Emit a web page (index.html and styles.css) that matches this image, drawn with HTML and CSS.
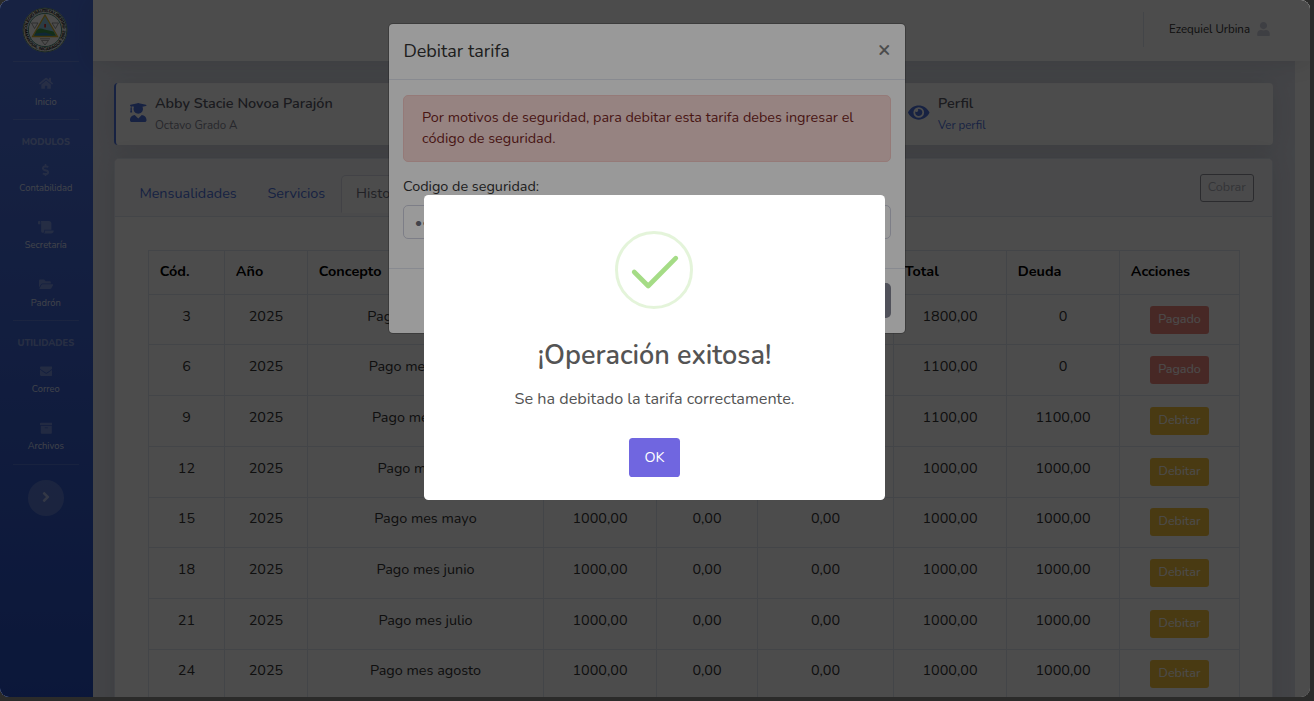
FILE: index.html
```html
<!DOCTYPE html>
<html lang="es">
<head>
<meta charset="utf-8">
<title>Debitar tarifa</title>
<link rel="stylesheet" href="styles.css">
</head>
<body>
<div class="window">
  <div class="page">
    <nav class="sidebar">
      <div class="brand">
        <svg width="46" height="46" viewBox="0 0 46 46">
          <defs><path id="ring-top" d="M5 23a18 18 0 0 1 36 0"/><path id="ring-bottom" d="M2.600 23a20.400 20.400 0 0 0 40.800 0"/></defs>
          <circle cx="23" cy="23" r="22.300" fill="#e9ecea"/>
          <circle cx="23" cy="23" r="21.900" fill="none" stroke="#4d7a68" stroke-width=".9"/>
          <circle cx="23" cy="23" r="16.600" fill="#fff" stroke="#4f9080" stroke-width="1"/>
          <text class="seal-text"><textPath href="#ring-top" textLength="55">COLEGIO BAUTISTA LIBERTAD</textPath></text>
          <text class="seal-text"><textPath href="#ring-bottom" textLength="63">MANAGUA, NICARAGUA 2002</textPath></text>
          <path d="M9.500 16h6.500L12.500 21.500zM30 16h6.500L33.500 21.500zM19.500 33.500h7L23 38zM18 31.800h10" fill="none" stroke="#777" stroke-width=".7"/>
          <path d="M23 8 35.500 29.500h-25z" fill="#93cbe4" stroke="#d6b12c" stroke-width="1.300"/>
          <path d="M14.500 23.500c3-3 5-2 8-1l9 2 2.500 4.300H12z" fill="#419a4f"/>
          <path d="M14 26.500l9-1 9 3H12.500z" fill="#3285bb"/>
          <path d="M22.200 17h1.800v3.500h-1.800z" fill="#c33"/>
        </svg>
      </div>
      <hr class="divider">
      <a class="nav-item"><svg class="ico" viewBox="0 0 576 512"><path d="M280.370 148.260L96 300.110V464a16 16 0 0 0 16 16l112.060-.29a16 16 0 0 0 15.920-16V368a16 16 0 0 1 16-16h64a16 16 0 0 1 16 16v95.640a16 16 0 0 0 16 16.050L464 480a16 16 0 0 0 16-16V300L295.670 148.260a12.190 12.190 0 0 0-15.300 0zM571.600 251.470L488 182.560V44.050a12 12 0 0 0-12-12h-56a12 12 0 0 0-12 12v72.610L318.470 43a48 48 0 0 0-61 0L4.340 251.470a12 12 0 0 0-1.600 16.900l25.500 31A12 12 0 0 0 45.150 301l235.220-193.740a12.190 12.190 0 0 1 15.300 0L530.900 301a12 12 0 0 0 16.900-1.600l25.500-31a12 12 0 0 0-1.700-16.930z"/></svg><span>Inicio</span></a>
      <hr class="divider">
      <div class="nav-heading">MODULOS</div>
      <a class="nav-item"><svg class="ico" viewBox="0 0 288 512"><path d="M209.200 233.400l-108-31.600C88.700 198.200 80 186.500 80 173.500c0-16.300 13.200-29.500 29.500-29.500h66.300c12.200 0 24.200 3.700 34.200 10.500 6.100 4.100 14.300 3.100 19.500-2l34.800-34c7.100-6.900 6.100-18.400-1.800-24.500C238 74.800 207.400 64.100 176 64V16c0-8.800-7.200-16-16-16h-32c-8.800 0-16 7.200-16 16v48h-2.500C45.800 64-5.400 118.700.5 183.600c4.200 46.100 39.400 83.600 83.800 96.600l102.500 30c12.500 3.700 21.200 15.300 21.200 28.300 0 16.300-13.200 29.500-29.500 29.500h-66.300C100 368 88 364.300 78 357.500c-6.100-4.100-14.300-3.100-19.500 2l-34.800 34c-7.100 6.900-6.100 18.400 1.800 24.500 24.500 19.200 55.100 29.900 86.500 30v48c0 8.800 7.200 16 16 16h32c8.800 0 16-7.200 16-16v-48.200c46.600-.9 90.300-28.600 105.700-72.700 21.500-61.600-14.600-124.800-72.500-141.700z"/></svg><span>Contabilidad</span></a>
      <a class="nav-item"><svg class="ico" viewBox="0 0 640 512"><path d="M48 0C21.530 0 0 21.530 0 48v64c0 8.840 7.160 16 16 16h80V48C96 21.530 74.470 0 48 0zm208 412.570V352h288V96c0-52.940-43.060-96-96-96H111.590C121.740 13.410 128 29.920 128 48v368c0 38.870 34.650 69.650 74.750 63.120C234.220 474 256 444.460 256 412.570zM288 384v32c0 52.930-43.060 96-96 96h336c61.860 0 112-50.140 112-112 0-8.840-7.160-16-16-16H288z"/></svg><span>Secretaría</span></a>
      <a class="nav-item"><svg class="ico" viewBox="0 0 576 512"><path d="M572.694 292.093L500.270 416.248A63.997 63.997 0 0 1 444.989 448H45.025c-18.523 0-30.064-20.093-20.731-36.093l72.424-124.155A64 64 0 0 1 152 256h399.964c18.523 0 30.064 20.093 20.730 36.093zM152 224h328v-48c0-26.510-21.490-48-48-48H272l-64-64H48C21.490 64 0 85.490 0 112v278.046l69.077-118.418C86.214 242.250 117.989 224 152 224z"/></svg><span>Padrón</span></a>
      <hr class="divider">
      <div class="nav-heading">UTILIDADES</div>
      <a class="nav-item"><svg class="ico" viewBox="0 0 512 512"><path d="M502.300 190.800c3.900-3.100 9.700-.2 9.700 4.700V400c0 26.500-21.500 48-48 48H48c-26.500 0-48-21.500-48-48V195.600c0-5 5.700-7.800 9.700-4.700 22.400 17.400 52.100 39.500 154.100 113.600 21.100 15.400 56.700 47.800 92.200 47.600 35.700.3 72-32.800 92.300-47.600 102-74.100 131.600-96.300 154-113.700zM256 320c23.200.4 56.600-29.200 73.400-41.400 132.700-96.300 142.800-104.700 173.400-128.700 5.800-4.500 9.200-11.500 9.200-18.900v-19c0-26.500-21.500-48-48-48H48c-26.500 0-48 21.500-48 48v19c0 7.400 3.400 14.300 9.200 18.900 30.600 23.900 40.700 32.400 173.400 128.700 16.800 12.200 50.200 41.800 73.400 41.400z"/></svg><span>Correo</span></a>
      <a class="nav-item"><svg class="ico" viewBox="0 0 512 512"><path d="M32 448c0 17.700 14.300 32 32 32h384c17.700 0 32-14.300 32-32V160H32v288zm160-212c0-6.600 5.400-12 12-12h104c6.600 0 12 5.400 12 12v8c0 6.600-5.400 12-12 12H204c-6.600 0-12-5.400-12-12v-8zM480 32H32C14.300 32 0 46.300 0 64v48c0 8.800 7.200 16 16 16h480c8.800 0 16-7.200 16-16V64c0-17.700-14.300-32-32-32z"/></svg><span>Archivos</span></a>
      <hr class="divider">
      <div class="toggle"><svg width="10" height="16" viewBox="0 0 256 512"><path d="M224.300 273l-136 136c-9.400 9.400-24.600 9.400-33.900 0l-22.600-22.600c-9.400-9.400-9.400-24.600 0-33.900l96.400-96.400-96.400-96.400c-9.400-9.400-9.400-24.600 0-33.900L54.300 103c9.400-9.400 24.600-9.400 33.900 0l136 136c9.500 9.400 9.500 24.600.1 34z"/></svg></div>
    </nav>
    <div class="main">
      <header class="topbar">
        <div class="topbar-divider"></div>
        <span class="user-name">Ezequiel Urbina</span>
        <svg class="user-icon" viewBox="0 0 448 512"><path d="M224 256c70.700 0 128-57.300 128-128S294.700 0 224 0 96 57.300 96 128s57.300 128 128 128zm89.600 32h-16.700c-22.200 10.200-46.900 16-72.900 16s-50.600-5.800-72.900-16h-16.700C60.200 288 0 348.200 0 422.400V464c0 26.500 21.500 48 48 48h352c26.500 0 48-21.500 48-48v-41.600c0-74.200-60.200-134.400-134.400-134.400z"/></svg>
      </header>
      <main class="content">
        <section class="card student">
          <div class="info">
            <svg class="grad" viewBox="0 0 448 512"><path d="M319.400 320.600L224 416l-95.400-95.400C57.100 323.700 0 382.200 0 454.400v9.600c0 26.500 21.500 48 48 48h352c26.500 0 48-21.500 48-48v-9.600c0-72.200-57.100-130.700-128.600-133.800zM13.600 79.800l6.400 1.500v58.400c-7 4.200-12 11.500-12 20.300 0 8.400 4.600 15.400 11.100 19.700L3.500 242c-1.700 6.900 2.100 14 7.600 14h41.800c5.500 0 9.300-7.100 7.600-14l-15.600-62.300C51.400 175.400 56 168.400 56 160c0-8.800-5-16.100-12-20.300V87.100l66 15.900c-8.600 17.200-14 36.400-14 57 0 70.700 57.300 128 128 128s128-57.300 128-128c0-20.600-5.300-39.800-14-57l96.300-23.200c18.200-4.400 18.200-27.100 0-31.500l-190.400-46c-13-3.100-26.700-3.100-39.700 0L13.600 48.200c-18.100 4.400-18.100 27.200 0 31.600z"/></svg>
            <div><div class="info-title">Abby Stacie Novoa Parajón</div><div class="info-sub">Octavo Grado A</div></div>
          </div>
          <div class="info">
            <svg class="eye" viewBox="0 0 576 512"><path d="M572.520 241.400C518.290 135.590 410.930 64 288 64S57.680 135.640 3.480 241.410a32.350 32.350 0 0 0 0 29.190C57.710 376.410 165.070 448 288 448s230.320-71.640 284.520-177.410a32.350 32.350 0 0 0 0-29.190zM288 400a144 144 0 1 1 144-144 143.930 143.930 0 0 1-144 144zm0-240a95.310 95.310 0 0 0-25.310 3.790 47.850 47.850 0 0 1-66.900 66.900A95.780 95.780 0 1 0 288 160z"/></svg>
            <div><div class="info-title">Perfil</div><div class="info-sub link">Ver perfil</div></div>
          </div>
        </section>
        <section class="card fees">
          <div class="card-header">
            <div class="tabs"><a class="tab">Mensualidades</a><a class="tab">Servicios</a><a class="tab active">Historial</a></div>
            <button class="btn-sm btn-outline">Cobrar</button>
          </div>
          <div class="card-body">
            <table class="table">
              <colgroup><col class="c-id"><col class="c-year"><col class="c-concept"><col class="c-price"><col class="c-disc"><col class="c-late"><col class="c-total"><col class="c-debt"><col class="c-act"></colgroup>
              <thead><tr><th>Cód.</th><th>Año</th><th>Concepto</th><th>Precio</th><th>Mora</th><th>Descuento</th><th>Total</th><th>Deuda</th><th>Acciones</th></tr></thead>
              <tbody>
                <tr><td>3</td><td>2025</td><td>Pago de matrícula</td><td>1800,00</td><td>0,00</td><td>0,00</td><td>1800,00</td><td>0</td><td><button class="btn-sm paid">Pagado</button></td></tr>
                <tr><td>6</td><td>2025</td><td>Pago mes febrero</td><td>1100,00</td><td>0,00</td><td>0,00</td><td>1100,00</td><td>0</td><td><button class="btn-sm paid">Pagado</button></td></tr>
                <tr><td>9</td><td>2025</td><td>Pago mes marzo</td><td>1100,00</td><td>0,00</td><td>0,00</td><td>1100,00</td><td>1100,00</td><td><button class="btn-sm debit">Debitar</button></td></tr>
                <tr><td>12</td><td>2025</td><td>Pago mes abril</td><td>1000,00</td><td>0,00</td><td>0,00</td><td>1000,00</td><td>1000,00</td><td><button class="btn-sm debit">Debitar</button></td></tr>
                <tr><td>15</td><td>2025</td><td>Pago mes mayo</td><td>1000,00</td><td>0,00</td><td>0,00</td><td>1000,00</td><td>1000,00</td><td><button class="btn-sm debit">Debitar</button></td></tr>
                <tr><td>18</td><td>2025</td><td>Pago mes junio</td><td>1000,00</td><td>0,00</td><td>0,00</td><td>1000,00</td><td>1000,00</td><td><button class="btn-sm debit">Debitar</button></td></tr>
                <tr><td>21</td><td>2025</td><td>Pago mes julio</td><td>1000,00</td><td>0,00</td><td>0,00</td><td>1000,00</td><td>1000,00</td><td><button class="btn-sm debit">Debitar</button></td></tr>
                <tr><td>24</td><td>2025</td><td>Pago mes agosto</td><td>1000,00</td><td>0,00</td><td>0,00</td><td>1000,00</td><td>1000,00</td><td><button class="btn-sm debit">Debitar</button></td></tr>
              </tbody>
            </table>
          </div>
        </section>
      </main>
    </div>
  </div>

  <div class="backdrop">
    <div class="modal">
      <div class="modal-header"><h5 class="modal-title">Debitar tarifa</h5><span class="close">×</span></div>
      <div class="modal-body">
        <div class="alert">Por motivos de seguridad, para debitar esta tarifa debes ingresar el código de seguridad.</div>
        <label class="label" for="code">Codigo de seguridad:</label>
        <input class="input" id="code" type="password" value="123456">
      </div>
      <div class="modal-footer"><button class="btn-secondary">Debitar</button></div>
    </div>
  </div>

  <div class="swal-backdrop">
    <div class="swal">
      <svg class="swal-icon" viewBox="0 0 78 78"><circle cx="39" cy="39" r="37.500" fill="none" stroke="#a5dc86" stroke-opacity=".3" stroke-width="3"/><path d="M19.200 41 33.200 55 60.800 27.200" fill="none" stroke="#a5dc86" stroke-width="4.700" stroke-linecap="round" stroke-linejoin="round"/></svg>
      <h2 class="swal-title">¡Operación exitosa!</h2>
      <p class="swal-text">Se ha debitado la tarifa correctamente.</p>
      <button class="swal-ok">OK</button>
    </div>
  </div>
</div>
</body>
</html>
```

FILE: styles.css
```css
* { box-sizing: border-box; }
html { font-size: 14.4px; }
body { margin: 0; height: 701px; overflow: hidden; background: #2b2b2a; font-family: Nunito, "Noto Sans", sans-serif; line-height: 1.5; }
button { font-family: inherit; }

.window { position: relative; width: 1310px; height: 697px; overflow: hidden; border-radius: 9px; background: #2b2b2a; }
.page { display: flex; height: 697px; overflow: hidden; background: #fff; color: #333; }

/* Sidebar */
.sidebar { flex: none; width: 93px; height: 780px; padding-right: 1.400px; background: linear-gradient(180deg, #4e73df 10%, #224abe 100%); }
.brand { display: flex; align-items: center; justify-content: center; height: 61px; padding: 0 1px 2px 0; }
.seal-text { font: 700 4.300px "Liberation Sans", sans-serif; fill: #111; }
.divider { height: 1px; margin: 0 13px; border: 0; background: rgba(255, 255, 255, .15); }
.nav-item { display: flex; flex-direction: column; align-items: center; height: 57.300px; padding-top: 15.400px; font-size: 9.360px; line-height: 14px; color: rgba(255, 255, 255, .8); }
.nav-item .ico { height: 12.600px; margin-bottom: 4.700px; fill: rgba(255, 255, 255, .3); }
.nav-heading { height: 28px; padding-top: 15px; text-align: center; font-size: 9.360px; font-weight: 800; line-height: 14px; color: rgba(255, 255, 255, .4); }
.toggle { display: flex; align-items: center; justify-content: center; width: 36px; height: 36px; margin: 15px auto 0; padding: 0 0 2px 1px; border-radius: 50%; background: rgba(255, 255, 255, .2); }
.toggle svg { fill: rgba(255, 255, 255, .5); }

/* Top bar */
.main { flex: 1; min-width: 0; }
.topbar { position: relative; display: flex; align-items: center; justify-content: flex-end; height: 61px; padding: 0 40px 3px 0; background: #fff; box-shadow: 0 2.200px 25.200px rgba(58, 59, 69, .15); font-size: 11.520px; color: #333; }
.topbar-divider { width: 1px; height: 35px; margin-right: 25px; background: #e3e6f0; }
.user-name { padding-top: 1px; }
.user-icon { width: 13px; height: 14.400px; margin-left: 7px; fill: #d1d3e2; }

/* Content */
.content { width: 1202px; height: 720px; padding: 22px 22px 0 21px; background: #e3e6f0; }
.card { background: #fff; border-radius: 5px; box-shadow: 0 2.200px 25.200px rgba(58, 59, 69, .15); }
.student { display: grid; grid-template-columns: 778px 1fr; height: 62px; border-left: 2px solid #4e73df; border-radius: 4px; padding-left: 14px; }
.info { display: flex; align-items: center; gap: 8.500px; }
.info svg { flex: none; margin-top: -3px; fill: #4e73df; }
.info > div { padding-top: 1px; }
.grad { width: 16.500px; height: 19px; }
.eye { width: 21.500px; height: 19px; }
.info-title { font-weight: 600; line-height: 21.600px; color: #5a5c69; }
.info-sub { font-size: 11.520px; line-height: 21.600px; color: #858796; }
.info-sub.link { color: #4e73df; }

.fees { height: 640px; margin-top: 13px; border: 1px solid #e3e6f0; }
.card-header { display: flex; justify-content: space-between; align-items: flex-start; height: 58px; padding: 16px 18px 0 9px; border-bottom: 1px solid #e3e6f0; border-radius: 4px 4px 0 0; background: #f8f9fc; }
.tabs { display: flex; }
.tab { height: 38px; padding: 7.200px 14.400px; border: 1px solid transparent; line-height: 21.600px; color: #4e73df; }
.tab.active { border-color: #dddfeb #dddfeb transparent; border-radius: 5px 5px 0 0; background: #fff; color: #6e707e; }
.btn-sm { display: inline-block; height: 28px; padding: 2px 7.200px 4px; border: 1px solid transparent; border-radius: 3px; font-size: 12.600px; line-height: 20px; color: #fff; }
.btn-outline { margin-top: -1px; border-color: #5a5c69; background: transparent; color: #858796; opacity: .65; }
.card-body { padding: 33px; }

.table { width: 1092px; table-layout: fixed; border-collapse: collapse; }
.table th, .table td { padding: 10.800px; border: 1px solid #e3e6f0; vertical-align: top; line-height: 21.600px; }
.table th { padding-top: 10px; padding-bottom: 11.200px; text-align: left; font-weight: 700; color: #000; }
.table td { height: 50.700px; text-align: center; padding-bottom: 6px; }
.table td .btn-sm { display: block; margin: 0 auto -2px; }
.c-id { width: 76px; } .c-year { width: 83px; } .c-concept { width: 236px; } .c-price { width: 113px; } .c-disc { width: 101px; }
.c-late { width: 136px; } .c-total { width: 113px; } .c-debt { width: 113px; } .c-act { width: 120px; }
.paid { background: #e74a3b; opacity: .65; }
.debit { background: #f6c23e; }

/* Form dialog */
.backdrop { position: absolute; inset: 0; background: rgba(0, 0, 0, .5); }
.modal { width: 518px; height: 311px; margin: 23px 0 0 388px; border: 1px solid rgba(0, 0, 0, .2); border-radius: 5px; background: #fff; background-clip: padding-box; color: #333; }
.modal-header { display: flex; justify-content: space-between; align-items: flex-start; height: 56.400px; padding: 14.400px; border-bottom: 1px solid #e3e6f0; }
.modal-title { margin: 0; font-size: 18px; font-weight: 400; line-height: 27px; }
.close { font-size: 21.600px; font-weight: 700; line-height: 21.600px; margin-top: 1px; color: #000; opacity: .5; }
.modal-body { padding: 14.400px 14px; }
.alert { padding: 10.800px 18px; border: 1px solid #f8ccc8; border-radius: 5px; background: #fadbd8; line-height: 21.600px; color: #78261f; }
.label { display: block; margin: 14.400px 0 7.200px; line-height: 21.600px; }
.input { display: block; width: 100%; height: 34.400px; margin-bottom: 14.400px; padding: 5.400px 10.800px; border: 1px solid #d1d3e2; border-radius: 5px; background: #fff; font: 14.400px Nunito, sans-serif; color: #6e707e; }
.modal-footer { display: flex; justify-content: flex-end; padding: 14.400px 14px; border-top: 1px solid #e3e6f0; }
.btn-secondary { height: 34.400px; padding: 0 10.800px; border: 0; border-radius: 5px; background: #858796; font-size: 14.400px; color: #fff; }

/* Confirmation dialog */
.swal-backdrop { position: absolute; inset: 0; background: rgba(0, 0, 0, .4); }
.swal { display: flex; flex-direction: column; align-items: center; width: 461px; height: 305px; margin: 195px 0 0 424px; padding-top: 36px; border-radius: 4.500px; background: #fff; color: #545454; }
.swal-icon { width: 78px; height: 78px; margin-right: 1px; }
.swal-title { margin: 26px 0 0; font-size: 27px; font-weight: 600; line-height: 41px; }
.swal-text { margin: 10px 0 0; font-size: 16.200px; line-height: 26px; }
.swal-ok { width: 51px; height: 39px; margin-top: 26px; padding: 0 0 2px; border: 0; border-radius: 3.600px; background: #7066e0; font-size: 14.400px; color: #fff; }
```
